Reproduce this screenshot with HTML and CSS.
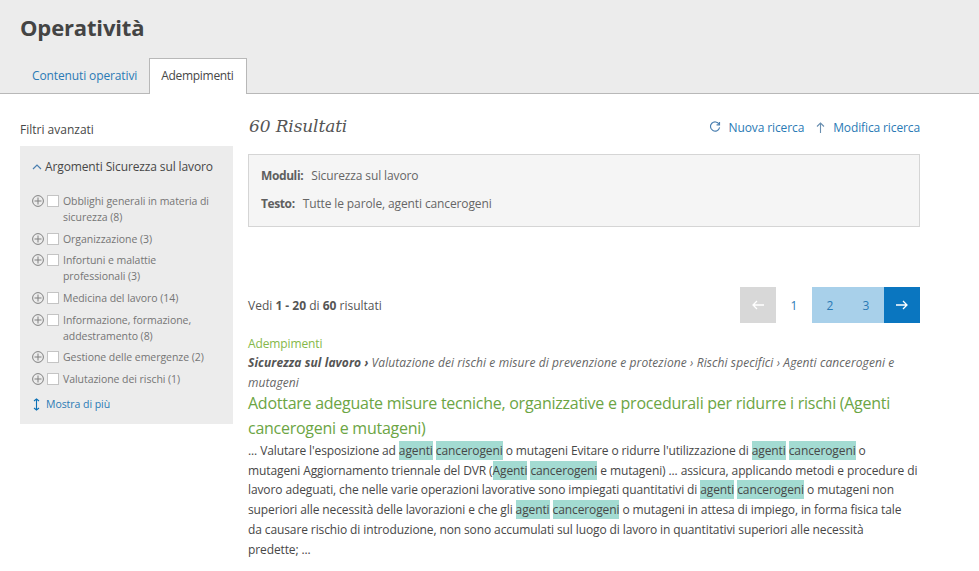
FILE: index.html
```html
<!DOCTYPE html>
<html lang="it">
<head>
<meta charset="utf-8">
<title>Operatività</title>
<link rel="stylesheet" href="styles.css">
</head>
<body>
<header class="top">
  <h1 class="title">Operatività</h1>
  <nav class="tabs">
    <a class="tab">Contenuti operativi</a>
    <a class="tab active">Adempimenti</a>
  </nav>
</header>
<div class="layout">
  <aside class="side">
    <div class="side-title">Filtri avanzati</div>
    <div class="filters">
      <div class="filter-head">
        <svg class="chev" width="10" height="6" viewBox="0 0 10 6"><path d="M1 5l4-4 4 4" fill="none" stroke="#4a7fb0" stroke-width="1.2"/></svg>
        <span>Argomenti Sicurezza sul lavoro</span>
      </div>
      <ul class="filter-list">
        <li class="filter"><svg class="plus" width="12" height="12" viewBox="0 0 12 12"><circle cx="6" cy="6" r="5.400" fill="none" stroke="#808080"/><path d="M6 2.500v7M2.500 6h7" stroke="#808080"/></svg><span class="box"></span><span class="lab">Obblighi generali in materia di sicurezza (8)</span></li>
        <li class="filter"><svg class="plus" width="12" height="12" viewBox="0 0 12 12"><circle cx="6" cy="6" r="5.400" fill="none" stroke="#808080"/><path d="M6 2.500v7M2.500 6h7" stroke="#808080"/></svg><span class="box"></span><span class="lab">Organizzazione (3)</span></li>
        <li class="filter"><svg class="plus" width="12" height="12" viewBox="0 0 12 12"><circle cx="6" cy="6" r="5.400" fill="none" stroke="#808080"/><path d="M6 2.500v7M2.500 6h7" stroke="#808080"/></svg><span class="box"></span><span class="lab">Infortuni e malattie<br>professionali (3)</span></li>
        <li class="filter"><svg class="plus" width="12" height="12" viewBox="0 0 12 12"><circle cx="6" cy="6" r="5.400" fill="none" stroke="#808080"/><path d="M6 2.500v7M2.500 6h7" stroke="#808080"/></svg><span class="box"></span><span class="lab">Medicina del lavoro (14)</span></li>
        <li class="filter"><svg class="plus" width="12" height="12" viewBox="0 0 12 12"><circle cx="6" cy="6" r="5.400" fill="none" stroke="#808080"/><path d="M6 2.500v7M2.500 6h7" stroke="#808080"/></svg><span class="box"></span><span class="lab">Informazione, formazione,<br>addestramento (8)</span></li>
        <li class="filter"><svg class="plus" width="12" height="12" viewBox="0 0 12 12"><circle cx="6" cy="6" r="5.400" fill="none" stroke="#808080"/><path d="M6 2.500v7M2.500 6h7" stroke="#808080"/></svg><span class="box"></span><span class="lab">Gestione delle emergenze (2)</span></li>
        <li class="filter"><svg class="plus" width="12" height="12" viewBox="0 0 12 12"><circle cx="6" cy="6" r="5.400" fill="none" stroke="#808080"/><path d="M6 2.500v7M2.500 6h7" stroke="#808080"/></svg><span class="box"></span><span class="lab">Valutazione dei rischi (1)</span></li>
      </ul>
      <a class="more"><svg width="7" height="13" viewBox="0 0 7 13"><path d="M3.500 1v11M1 3l2.500-2 2.500 2M1 10l2.500 2 2.500-2" fill="none" stroke="#0a6fb5" stroke-width="1.100"/></svg><span>Mostra di più</span></a>
    </div>
  </aside>
  <main class="main">
    <div class="res-head">
      <h2 class="res-title">60 Risultati</h2>
      <div class="actions">
        <a class="action"><svg width="12" height="12" viewBox="0 0 13 13"><path d="M11 3.600A5 5 0 1 0 11.500 7" fill="none" stroke="#4a7fb0" stroke-width="1.200"/><path d="M11.400 1v3.200H8.200" fill="none" stroke="#4a7fb0" stroke-width="1.200"/></svg><span>Nuova ricerca</span></a>
        <a class="action"><svg width="9" height="11" viewBox="0 0 9 11"><path d="M4.500 11V1M1 4.500L4.500 1 8 4.500" fill="none" stroke="#6a8fb0" stroke-width="1.100"/></svg><span>Modifica ricerca</span></a>
      </div>
    </div>
    <div class="query">
      <div class="q-row"><b>Moduli:</b><span>Sicurezza sul lavoro</span></div>
      <div class="q-row"><b>Testo:</b><span>Tutte le parole, agenti cancerogeni</span></div>
    </div>
    <div class="pager-row">
      <div class="count">Vedi <b>1 - 20</b> di <b>60</b> risultati</div>
      <div class="pager">
        <a class="pg prev"><svg width="12" height="10" viewBox="0 0 12 10"><path d="M12 5H1M5 1L1 5l4 4" fill="none" stroke="#fff" stroke-width="1.300"/></svg></a>
        <a class="pg cur">1</a>
        <a class="pg num">2</a>
        <a class="pg num">3</a>
        <a class="pg next"><svg width="12" height="10" viewBox="0 0 12 10"><path d="M0 5h11M7 1l4 4-4 4" fill="none" stroke="#fff" stroke-width="1.300"/></svg></a>
      </div>
    </div>
    <article class="result">
      <div class="kind">Adempimenti</div>
      <div class="crumbs"><b>Sicurezza sul lavoro ›</b> Valutazione dei rischi e misure di prevenzione e protezione › Rischi specifici › Agenti cancerogeni e mutageni</div>
      <h3 class="res-link">Adottare adeguate misure tecniche, organizzative e procedurali per ridurre i rischi (Agenti cancerogeni e mutageni)</h3>
      <p class="snippet">... Valutare l'esposizione ad <mark>agenti</mark> <mark>cancerogeni</mark> o mutageni Evitare o ridurre l'utilizzazione di <mark>agenti</mark> <mark>cancerogeni</mark> o mutageni Aggiornamento triennale del DVR (<mark>Agenti</mark> <mark>cancerogeni</mark> e mutageni) ... assicura, applicando metodi e procedure di lavoro adeguati, che nelle varie operazioni lavorative sono impiegati quantitativi di <mark>agenti</mark> <mark>cancerogeni</mark> o mutageni non superiori alle necessità delle lavorazioni e che gli <mark>agenti</mark> <mark>cancerogeni</mark> o mutageni in attesa di impiego, in forma fisica tale da causare rischio di introduzione, non sono accumulati sul luogo di lavoro in quantitativi superiori alle necessità predette;&nbsp;...</p>
    </article>
  </main>
</div>
</body>
</html>
```
FILE: styles.css
```css
* { box-sizing: border-box; }
html, body { margin: 0; padding: 0; }
body {
  background: #fff;
  color: #474747;
  font-family: "Open Sans", "Noto Sans", sans-serif;
  font-size: 12px;
  letter-spacing: -0.12px;
  height: 571px;
  overflow: hidden;
}
.top {
  background: #ececec;
  border-bottom: 1px solid #b8b8b8;
  height: 94px;
  padding: 12px 20px 0;
  display: flex;
  flex-direction: column;
  justify-content: space-between;
}
.title {
  margin: 0;
  font-size: 22px;
  line-height: 30px;
  font-weight: 700;
  color: #444;
  letter-spacing: -0.15px;
}
.tabs { display: flex; margin-bottom: -1px; }
.tab {
  height: 36px;
  padding: 0 11px;
  line-height: 34px;
  color: #2a7ab5;
  border: 1px solid transparent;
  border-bottom: 0;
}
.tab.active {
  background: #fff;
  color: #474747;
  border-color: #b8b8b8;
  padding-right: 12px;
  letter-spacing: -0.3px;
}
.layout {
  display: flex;
  padding: 0 59px 0 20px;
  gap: 15px;
}
.side { width: 213px; flex: none; padding-top: 27px; }
.side-title { line-height: 18px; color: #474747; letter-spacing: 0; }
.filters {
  margin-top: 7px;
  background: #ececec;
  padding: 12px;
  height: 278px;
}
.filter-head { display: flex; align-items: center; gap: 3px; line-height: 18px; color: #474747; }
.filter-list { list-style: none; margin: 17px 0 0; padding: 0; }
.filter { display: flex; align-items: flex-start; margin-bottom: 5.700px; font-size: 10.500px; letter-spacing: -0.05px; line-height: 16px; color: #757575; }
.plus { flex: none; margin: 2px 3px 0 0; }
.box { flex: none; width: 12px; height: 12px; background: #fff; border: 1px solid #c4c4c4; margin: 2px 4px 0 0; }
.lab { flex: 1; }
.more { display: flex; align-items: center; gap: 6px; margin-top: 10px; padding-left: 1px; font-size: 10.500px; letter-spacing: -0.05px; color: #2a7ab5; }
.main { flex: 1; min-width: 0; }
.res-head { display: flex; justify-content: space-between; align-items: center; height: 60px; padding-top: 6px; }
.res-title { margin: -2px 0 0 1px; font-family: "DejaVu Serif", serif; font-style: italic; font-weight: 400; font-size: 17px; color: #555; }
.actions { display: flex; gap: 12px; }
.action { display: flex; align-items: center; gap: 8px; color: #2a7ab5; }
.query { background: #f5f5f5; border: 1px solid #d5d5d5; height: 73px; padding: 12px 12px; color: #666; }
.q-row { display: flex; gap: 8px; line-height: 18px; margin-bottom: 10px; }
.q-row b { color: #5f5f5f; letter-spacing: -0.4px; }
.pager-row { display: flex; justify-content: space-between; align-items: center; margin-top: 60px; height: 36px; letter-spacing: 0; }
.count { color: #555; }
.pager { display: flex; }
.pg { width: 36px; height: 36px; display: flex; align-items: center; justify-content: center; color: #2a7ab5; }
.prev { background: #d8d8d8; }
.num { background: #a8d0ea; }
.next { background: #0a76c0; }
.result { margin-top: 12px; }
.kind { color: #85b84a; line-height: 18px; }
.crumbs { font-style: italic; line-height: 19.500px; color: #666; letter-spacing: 0.09px; }
.crumbs b { color: #555; }
.res-link { margin: -1px 0 0; font-weight: 400; font-size: 16px; letter-spacing: -0.26px; line-height: 25px; color: #6ca544; }
.snippet { margin: 0; padding-right: 2px; line-height: 19.700px; color: #474747; letter-spacing: -0.11px; }
mark { background: #a3dbd2; color: inherit; padding: 1px 0; }
```
